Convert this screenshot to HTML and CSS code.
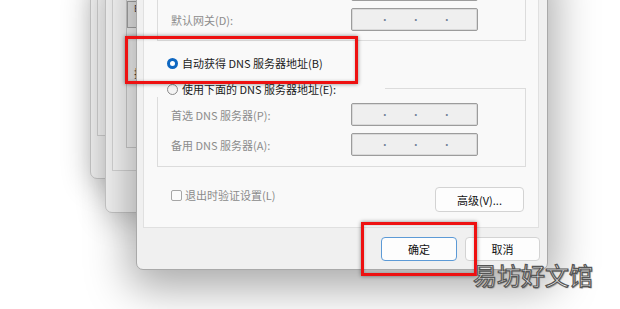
FILE: index.html
```html
<!DOCTYPE html>
<html lang="zh-CN">
<head>
<meta charset="utf-8">
<title>DNS</title>
<link rel="stylesheet" href="styles.css">
</head>
<body>
<div class="desk">
  <div class="win w1">
    <div class="w1-panel"></div>
  </div>
  <div class="win w2">
    <div class="w2-panel">
      <div class="w2-group">
        <div class="w2-box">E</div>
        <div class="w2-label">接</div>
      </div>
    </div>
  </div>

  <div class="dialog">
    <div class="page">
      <div class="group g1">
        <div class="row">
          <span class="label"></span>
          <div class="ip"></div>
        </div>
        <div class="row">
          <span class="label">默认网关(D):</span>
          <div class="ip"><span>.</span><span>.</span><span>.</span></div>
        </div>
      </div>

      <div class="radio-row">
        <span class="radio on"></span>
        <span class="rtext">自动获得 DNS 服务器地址(B)</span>
      </div>

      <div class="group g2">
        <div class="legend">
          <span class="radio"></span>
          <span class="rtext">使用下面的 DNS 服务器地址(E):</span>
        </div>
        <div class="row">
          <span class="label">首选 DNS 服务器(P):</span>
          <div class="ip"><span>.</span><span>.</span><span>.</span></div>
        </div>
        <div class="row">
          <span class="label">备用 DNS 服务器(A):</span>
          <div class="ip"><span>.</span><span>.</span><span>.</span></div>
        </div>
      </div>

      <div class="bottom-row">
        <div class="check">
          <span class="box"></span>
          <span class="ctext">退出时验证设置(L)</span>
        </div>
        <button class="btn adv">高级(V)...</button>
      </div>
    </div>

    <div class="footer">
      <button class="btn ok">确定</button>
      <button class="btn">取消</button>
    </div>
  </div>

  <div class="mark m1"></div>
  <div class="mark m2"></div>
  <div class="watermark">易坊好文馆</div>
</div>
</body>
</html>
```

FILE: styles.css
```css
* { box-sizing: border-box; }
html, body {
  margin: 0;
  padding: 0;
  background: #ffffff;
}
body {
  width: 620px;
  height: 309px;
  overflow: hidden;
  font-family: "Noto Sans CJK SC", "Noto Sans", sans-serif;
  font-size: 11px;
  color: #1b1b1b;
}
.desk {
  position: relative;
  width: 620px;
  height: 309px;
  overflow: hidden;
  background: #ffffff;
}

/* background windows */
.win {
  position: absolute;
  background: #f0f0f0;
  border: 1px solid #c6c6c6;
  border-radius: 7px;
  box-shadow: 0 6px 30px rgba(0, 0, 0, 0.24);
}
.w1 {
  left: 90px;
  top: -20px;
  width: 220px;
  height: 199px;
  padding: 0 0 0 6px;
}
.w1-panel {
  height: 155px;
  border-left: 1px solid #d0d0d0;
  border-bottom: 1px solid #d0d0d0;
  background: #f6f6f6;
}
.w2 {
  left: 105px;
  top: -20px;
  width: 220px;
  height: 233px;
  padding: 0 0 0 6px;
  background: #f3f3f3;
}
.w2-panel {
  height: 190px;
  border-left: 1px solid #d6d6d6;
  border-bottom: 1px solid #d6d6d6;
  background: #f8f8f8;
  padding: 0 0 0 13px;
}
.w2-group {
  height: 167px;
  border-left: 1px solid #cfcfcf;
  border-bottom: 1px solid #cfcfcf;
  padding: 20px 0 0 0;
}
.w2-box {
  width: 40px;
  height: 27px;
  border: 1px solid #a8a8a8;
  background: #ececec;
  font-size: 9px;
  line-height: 14px;
  padding-left: 6px;
  color: #444;
}
.w2-label {
  margin-top: 38px;
  padding-left: 7px;
  font-size: 11px;
  line-height: 14px;
  color: #333;
}

/* main dialog */
.dialog {
  position: absolute;
  left: 136px;
  top: -40px;
  width: 412px;
  display: flex;
  flex-direction: column;
  background: #f0f0f0;
  border: 1px solid #a9a9a9;
  border-radius: 0 0 7px 7px;
  box-shadow: 0 12px 44px 6px rgba(0, 0, 0, 0.34);
}
.page {
  margin: 0 8px 0 6px;
  padding: 4px 12px 15px 13px;
  background: #f9f9f9;
  border: 1px solid #e0e0e0;
  border-top: none;
}
.group {
  border: 1px solid #dcdcdc;
  display: flex;
  flex-direction: column;
  gap: 7px;
}
.g1 {
  margin-top: 1px;
  padding: 11px 0 9px 13px;
}
.row {
  display: grid;
  grid-template-columns: 180px 127px;
  align-items: center;
  height: 23px;
}
.label {
  color: #8c8c8c;
  line-height: 14px;
}
.ip {
  height: 23px;
  border: 1px solid #9c9c9c;
  border-radius: 2px;
  background: #efefef;
  box-shadow: inset 0 0 0 1px #dadada;
  display: flex;
  padding-left: 31px;
  gap: 28px;
  align-items: flex-start;
}
.ip span {
  display: block;
  width: 3px;
  font-size: 11px;
  line-height: 11px;
  margin-top: 2px;
  color: #6f7f98;
  font-weight: bold;
}

.radio-row {
  display: flex;
  align-items: center;
  height: 16px;
  margin: 14px 0 17px 10px;
}
.radio {
  width: 11px;
  height: 11px;
  border-radius: 50%;
  border: 1px solid #8a8a8a;
  background: #f4f4f4;
  flex: none;
}
.radio.on {
  border: 3px solid #0f67c1;
  background: #ffffff;
}
.rtext {
  margin-left: 4px;
  line-height: 14px;
  color: #1b1b1b;
}

.g2 {
  position: relative;
  padding: 14px 0 10px 13px;
}
.legend {
  position: absolute;
  left: -1px;
  top: -8px;
  width: 228px;
  height: 16px;
  display: flex;
  align-items: center;
  padding-left: 10px;
  background: #f9f9f9;
}

.bottom-row {
  display: flex;
  justify-content: space-between;
  align-items: flex-start;
  margin-top: 20px;
}
.check {
  display: flex;
  align-items: center;
  margin: 1px 0 0 14px;
}
.box {
  width: 11px;
  height: 11px;
  border: 1px solid #a6a6a6;
  border-radius: 2px;
  background: #fbfbfb;
}
.ctext {
  margin-left: 3px;
  color: #8a8a8a;
  line-height: 14px;
}
.btn {
  font-family: "Noto Sans CJK SC", "Noto Sans", sans-serif;
  font-size: 11px;
  color: #111111;
  background: #fdfdfd;
  border: 1px solid #d3d3d3;
  border-radius: 4px;
  height: 24px;
  width: 75px;
  padding: 0;
  line-height: 14px;
}
.adv {
  width: 89px;
  height: 25px;
  margin-right: 2px;
}
.footer {
  display: flex;
  justify-content: flex-end;
  gap: 8px;
  padding: 9px 7px 8px 0;
}
.ok {
  width: 76px;
  border-color: #5c9ad6;
}

/* annotations */
.mark {
  position: absolute;
  border: 3px solid #ee1111;
  box-shadow: 0 0 4px rgba(0, 0, 0, 0.45), inset 0 0 3px rgba(0, 0, 0, 0.25);
}
.m1 {
  left: 125px;
  top: 36px;
  width: 233px;
  height: 48px;
}
.m2 {
  left: 361px;
  top: 222px;
  width: 116px;
  height: 54px;
}
.watermark {
  position: absolute;
  left: 473px;
  top: 259px;
  font-family: "Noto Sans CJK SC", sans-serif;
  font-size: 24px;
  line-height: 32px;
  color: #ffffff;
  -webkit-text-stroke: 1.2px #555555;
  text-shadow: 1px 1px 1px rgba(0, 0, 0, 0.35);
}
```
